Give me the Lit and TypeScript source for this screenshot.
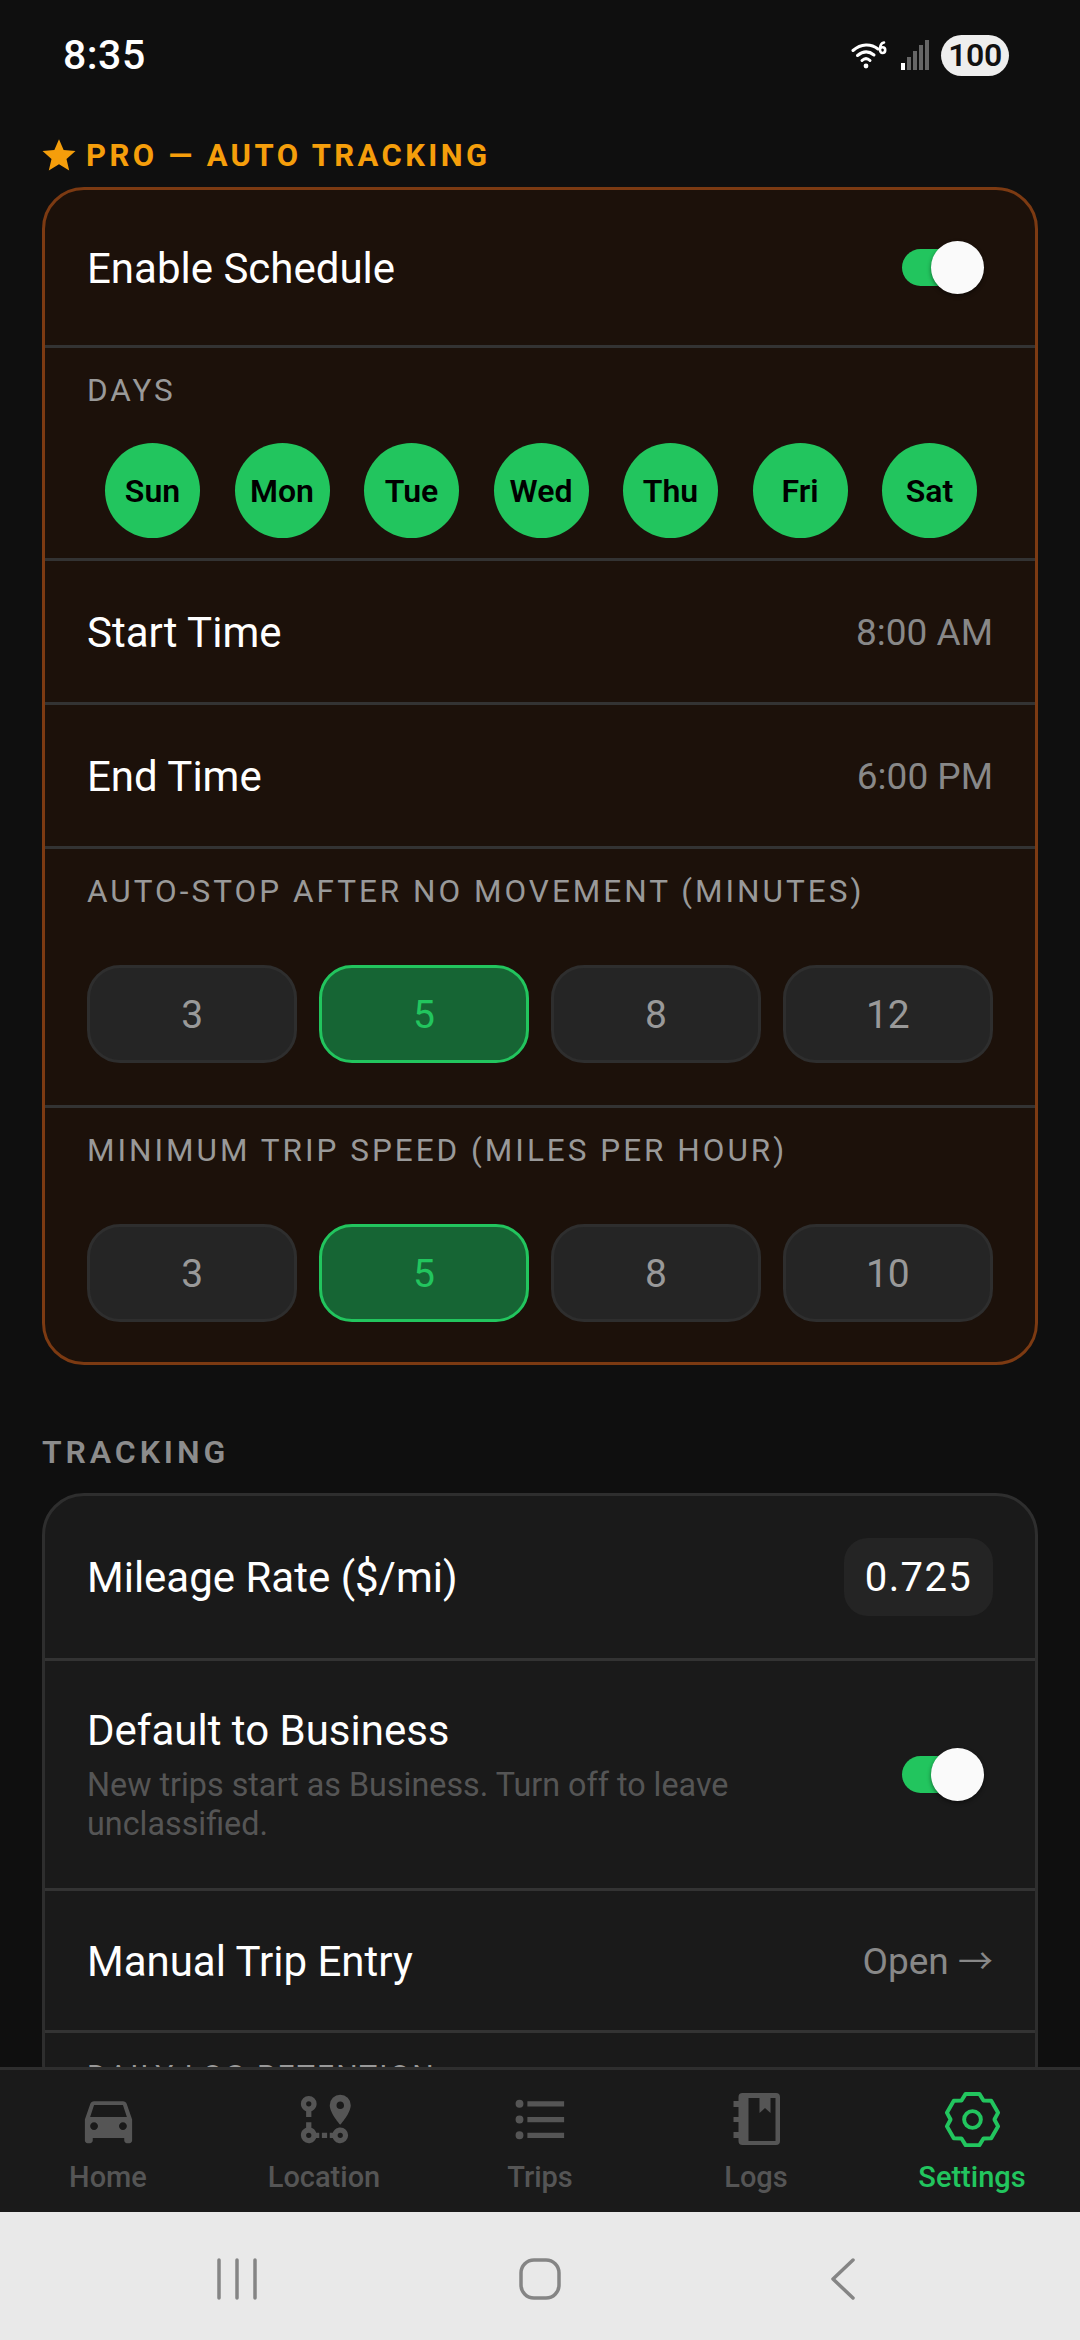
import { LitElement, html, css, svg } from "lit";
import { customElement } from "lit/decorators.js";

const DAYS = ["Sun", "Mon", "Tue", "Wed", "Thu", "Fri", "Sat"];

function gearPath(): string {
  const cx = 32, cy = 32, rOut = 26, rIn = 19.5;
  const pts: string[] = [];
  for (let k = 0; k < 6; k++) {
    const a = (-90 + k * 60) * Math.PI / 180;
    const ox = Math.cos(a), oy = Math.sin(a), tx = -oy, ty = ox;
    const p = (r: number, w: number) => `${(cx + ox * r + tx * w).toFixed(2)} ${(cy + oy * r + ty * w).toFixed(2)}`;
    pts.push(p(rIn, -11), p(rOut, -7), p(rOut, 7), p(rIn, 11));
  }
  return "M" + pts.join("L") + "Z";
}

@customElement("app-root")
export class AppRoot extends LitElement {
  static styles = css`
    :host { display: flex; flex-direction: column; width: 1080px; height: 2340px; overflow: hidden; background: #0f0f0f; font-family: Roboto, "Liberation Sans", sans-serif; color: #fff; }
    * { box-sizing: border-box; }
    .status { height: 110px; flex: none; display: flex; align-items: center; justify-content: space-between; padding: 0 71px 0 63px; }
    .time { font-size: 41px; font-weight: 500; letter-spacing: 0.5px; }
    .sys { display: flex; align-items: center; }
    .sys svg { display: block; }
    .signal { margin-left: 13px; }
    .batt { width: 68px; height: 41px; margin-left: 11px; border-radius: 21px; background: #eee; color: #111; font-size: 32px; font-weight: 600; display: flex; align-items: center; justify-content: center; letter-spacing: -0.5px; }
    .scroll { flex: 1; min-height: 0; overflow: hidden; padding: 26px 42px 0; }
    .pro-head { display: flex; align-items: center; gap: 9px; color: #f59e0b; font-size: 31px; font-weight: 700; letter-spacing: 3.4px; height: 38px; margin-bottom: 13px; }
    .star { width: 36px; height: 36px; margin-left: -1px; flex: none; display: block; }
    .card { border: 3px solid #2e2e2e; border-radius: 42px; background: #1a1a1a; overflow: hidden; }
    .card.pro { border-color: #7c3a12; background: #1c110a; }
    .sec-head { color: #8c8c8c; font-size: 32px; font-weight: 600; letter-spacing: 3.9px; margin: 68px 0 0; height: 38px; line-height: 38px; }
    .card.track { margin-top: 22px; }
    .row { display: flex; align-items: center; justify-content: space-between; padding: 0 42px; border-bottom: 3px solid #333; }
    .r-enable { height: 158px; }
    .r-time { height: 144px; }
    .r-rate { height: 165px; }
    .r-def { height: 230px; }
    .r-man { height: 142px; }
    .label { font-size: 42px; color: #fff; line-height: 48px; padding-top: 2px; }
    .val { font-size: 37px; line-height: 44px; color: #888; padding-top: 2px; white-space: nowrap; }
    .arrow { font-family: "Noto Sans CJK SC", Roboto, sans-serif; font-size: 35px; line-height: 0; }
    .days-sec { height: 213px; border-bottom: 3px solid #333; padding: 24px 42px 0; }
    .cap { color: #999; font-size: 31.5px; letter-spacing: 3px; line-height: 38px; white-space: nowrap; }
    .cap.small { font-size: 30px; letter-spacing: 2.1px; }
    .days { display: flex; justify-content: space-between; padding: 0 16px 0 18px; margin-top: 33px; }
    .day { width: 95px; height: 95px; border-radius: 50%; background: #22c55e; color: #000; font-size: 32px; font-weight: 600; display: flex; align-items: center; justify-content: center; }
    .opt-sec { padding: 24px 42px 0; border-bottom: 3px solid #333; height: 259px; }
    .opt-sec.last { border-bottom: 0; height: 254px; }
    .opts { display: flex; gap: 21.5px; margin-top: 54px; }
    .opt { flex: 1; height: 98px; border-radius: 33px; border: 3px solid #2e2e2e; background: #252525; color: #999; font-size: 39px; padding-top: 2px; display: flex; align-items: center; justify-content: center; }
    .opt.on { background: #166534; border-color: #22c55e; color: #22c55e; }
    .toggle { position: relative; width: 82px; height: 53px; margin-right: 9px; flex: none; }
    .track-bar { position: absolute; left: 0; right: 8px; top: 8px; height: 37px; border-radius: 19px; background: #22c55e; }
    .thumb { position: absolute; right: 0; top: 0; width: 53px; height: 53px; border-radius: 50%; background: #fafafa; box-shadow: 0 2px 4px rgba(0,0,0,.45); }
    .pill { width: 149px; height: 78px; border-radius: 24px; background: #242424; font-size: 40px; letter-spacing: 1.4px; color: #fff; display: flex; align-items: center; justify-content: center; }
    .def-text { width: 720px; }
    .sub { font-size: 32.3px; line-height: 39px; color: #555; margin-top: 11px; }
    .retention { padding: 24px 42px 0; height: 70px; }
    .nav { flex: none; height: 145px; border-top: 3px solid #2e2e2e; background: #1a1a1a; display: grid; grid-template-columns: repeat(5, 1fr); }
    .tab { display: flex; flex-direction: column; align-items: center; color: #555; padding-top: 18px; }
    .tab svg { width: 63px; height: 63px; display: block; fill: currentColor; }
    .tab span { font-size: 29px; font-weight: 500; line-height: 34px; margin-top: 9px; }
    .tab.on { color: #22c55e; }
    .sysnav { flex: none; height: 128px; background: #e9e9e9; display: grid; grid-template-columns: 1fr 1fr 1fr; padding: 6px 86px 0; align-items: center; justify-items: center; }
    .sysnav svg { display: block; fill: none; stroke: #858585; stroke-width: 3.5; stroke-linecap: round; stroke-linejoin: round; }
  `;

  private opts(vals: number[]) {
    return html`<div class="opts">${vals.map((v) => html`<div class="opt ${v === 5 ? "on" : ""}">${v}</div>`)}</div>`;
  }

  private toggle() {
    return html`<div class="toggle"><div class="track-bar"></div><div class="thumb"></div></div>`;
  }

  render() {
    return html`
      <div class="status">
        <div class="time">8:35</div>
        <div class="sys">
          <svg width="36" height="30" viewBox="0 0 36 30" fill="none" stroke="#fff" stroke-linecap="round">
            <path stroke-width="3" d="M2 10.5C10 3.5 20 3.5 27 9"/>
            <path stroke-width="3" d="M6.5 15.5C12 11 18 11 23 15"/>
            <path stroke-width="3" d="M11 20.5C13.5 18 16.5 18 19 20.5"/>
            <circle cx="15" cy="26" r="2.4" fill="#fff" stroke="none"/>
            <path stroke-width="2.6" d="M33 2.5C30 3 29 6 29 9.5C29 11.5 30 13 31.5 13C33.2 13 34.2 11.6 34.2 10C34.2 8.4 33 7.2 31.5 7.2C30.2 7.2 29.400 8 29 9"/>
          </svg>
          <svg class="signal" width="30" height="30" viewBox="0 0 30 30">
            <rect x="1" y="23" width="4" height="7" fill="#fff"/>
            <rect x="7" y="17" width="4" height="13" fill="#666"/>
            <rect x="13" y="11" width="4" height="19" fill="#666"/>
            <rect x="19" y="5" width="4" height="25" fill="#666"/>
            <rect x="25" y="0" width="4" height="30" fill="#666"/>
          </svg>
          <div class="batt">100</div>
        </div>
      </div>
      <div class="scroll">
        <div class="pro-head">
          <svg class="star" viewBox="0 0 24 24"><path fill="#f59e0b" d="M12 1.500l3.100 7.200 7.900.7-6 5.200 1.800 7.700L12 18.200l-6.800 4.100L7 14.600 1 9.400l7.900-.7z"/></svg>
          <span>PRO — AUTO TRACKING</span>
        </div>
        <div class="card pro">
          <div class="row r-enable"><div class="label">Enable Schedule</div>${this.toggle()}</div>
          <div class="days-sec">
            <div class="cap">DAYS</div>
            <div class="days">${DAYS.map((d) => html`<div class="day">${d}</div>`)}</div>
          </div>
          <div class="row r-time"><div class="label">Start Time</div><div class="val">8:00 AM</div></div>
          <div class="row r-time"><div class="label">End Time</div><div class="val">6:00 PM</div></div>
          <div class="opt-sec">
            <div class="cap">AUTO-STOP AFTER NO MOVEMENT (MINUTES)</div>
            ${this.opts([3, 5, 8, 12])}
          </div>
          <div class="opt-sec last">
            <div class="cap">MINIMUM TRIP SPEED (MILES PER HOUR)</div>
            ${this.opts([3, 5, 8, 10])}
          </div>
        </div>
        <div class="sec-head">TRACKING</div>
        <div class="card track">
          <div class="row r-rate"><div class="label">Mileage Rate ($/mi)</div><div class="pill">0.725</div></div>
          <div class="row r-def">
            <div class="def-text">
              <div class="label">Default to Business</div>
              <div class="sub">New trips start as Business. Turn off to leave unclassified.</div>
            </div>
            ${this.toggle()}
          </div>
          <div class="row r-man"><div class="label">Manual Trip Entry</div><div class="val">Open <span class="arrow">→</span></div></div>
          <div class="retention"><div class="cap small">DAILY LOG RETENTION</div></div>
        </div>
      </div>
      <div class="nav">
        <div class="tab"><svg viewBox="0 0 24 24"><path d="M18.92 6.01C18.72 5.42 18.16 5 17.5 5h-11c-.66 0-1.21.42-1.42 1.01L3 12v8c0 .55.45 1 1 1h1c.55 0 1-.45 1-1v-1h12v1c0 .55.45 1 1 1h1c.55 0 1-.45 1-1v-8l-2.08-5.99zM6.5 16c-.83 0-1.5-.67-1.5-1.5S5.67 13 6.5 13s1.5.67 1.5 1.5S7.33 16 6.5 16zm11 0c-.83 0-1.5-.67-1.5-1.5s.67-1.5 1.5-1.5 1.5.67 1.5 1.5-.67 1.5-1.5 1.5zM5 11l1.5-4.5h11L19 11H5z"/></svg><span>Home</span></div>
        <div class="tab"><svg viewBox="0 0 24 24"><path d="M18,15A3,3 0 0,1 21,18A3,3 0 0,1 18,21C16.69,21 15.58,20.17 15.17,19H14V17H15.17C15.58,15.83 16.69,15 18,15M18,17A1,1 0 0,0 17,18A1,1 0 0,0 18,19A1,1 0 0,0 19,18A1,1 0 0,0 18,17M18,8A1.43,1.43 0 0,0 19.43,6.57C19.43,5.78 18.79,5.14 18,5.14C17.21,5.14 16.57,5.78 16.57,6.57A1.43,1.43 0 0,0 18,8M18,2.57A4,4 0 0,1 22,6.57C22,9.57 18,14 18,14C18,14 14,9.57 14,6.57A4,4 0 0,1 18,2.57M8.83,17H10V19H8.83C8.42,20.17 7.31,21 6,21A3,3 0 0,1 3,18C3,16.69 3.83,15.58 5,15.17V13H7V15.17C7.85,15.47 8.53,16.15 8.83,17M6,17A1,1 0 0,0 5,18A1,1 0 0,0 6,19A1,1 0 0,0 7,18A1,1 0 0,0 6,17M6,3A3,3 0 0,1 9,6C9,7.31 8.17,8.42 7,8.83V11H5V8.83C3.83,8.42 3,7.31 3,6A3,3 0 0,1 6,3M6,5A1,1 0 0,0 5,6A1,1 0 0,0 6,7A1,1 0 0,0 7,6A1,1 0 0,0 6,5M11,19V17H13V19H11"/></svg><span>Location</span></div>
        <div class="tab"><svg viewBox="0 0 24 24"><path d="M7,5H21V7H7V5M7,13V11H21V13H7M4,4.5A1.5,1.5 0 0,1 5.5,6A1.5,1.5 0 0,1 4,7.5A1.5,1.5 0 0,1 2.5,6A1.5,1.5 0 0,1 4,4.5M4,10.5A1.5,1.5 0 0,1 5.5,12A1.5,1.5 0 0,1 4,13.5A1.5,1.5 0 0,1 2.5,12A1.5,1.5 0 0,1 4,10.5M7,19V17H21V19H7M4,16.5A1.5,1.5 0 0,1 5.5,18A1.5,1.5 0 0,1 4,19.5A1.5,1.5 0 0,1 2.5,18A1.5,1.5 0 0,1 4,16.5Z"/></svg><span>Trips</span></div>
        <div class="tab"><svg viewBox="0 0 63 63"><path fill-rule="evenodd" d="M17.5 5H51a4 4 0 0 1 4 4V53a4 4 0 0 1-4 4H17.5a4 4 0 0 1-4-4V50H8.5V44H13.5V34H8.5V29H13.5V19H8.5V13H13.5V9a4 4 0 0 1 4-4ZM23.5 10V53H50.500V10H45.500V25L40 20L34.500 25V10Z"/></svg><span>Logs</span></div>
        <div class="tab on"><svg viewBox="0 0 64 64">${svg`<path d=${gearPath()} fill="none" stroke="currentColor" stroke-width="4" stroke-linejoin="round"/><circle cx="32" cy="32" r="8.500" fill="none" stroke="currentColor" stroke-width="4"/>`}</svg><span>Settings</span></div>
      </div>
      <div class="sysnav">
        <svg width="42" height="44" viewBox="0 0 42 44"><path d="M3 3V41M21 3V41M39 3V41"/></svg>
        <svg width="44" height="44" viewBox="0 0 44 44"><rect x="3" y="3" width="38" height="38" rx="13"/></svg>
        <svg width="28" height="44" viewBox="0 0 28 44"><path d="M24 3L4 22L24 41"/></svg>
      </div>
    `;
  }
}
